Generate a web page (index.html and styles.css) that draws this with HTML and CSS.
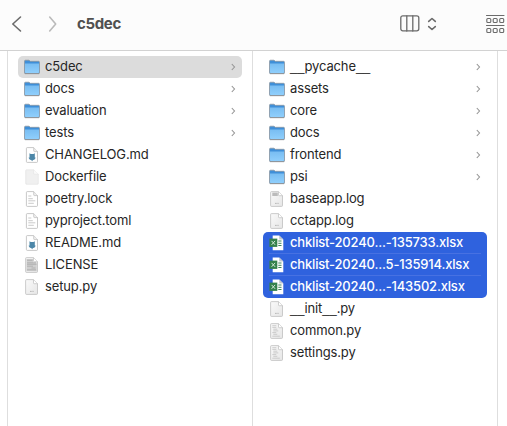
FILE: index.html
```html
<!DOCTYPE html>
<html lang="en">
<head>
<meta charset="utf-8">
<title>c5dec</title>
<link rel="stylesheet" href="styles.css">
</head>
<body>
<svg class="defs" aria-hidden="true">
  <defs>
    <linearGradient id="blue" x1="0" y1="0" x2="0" y2="1"><stop offset="0" stop-color="#78bdf2"/><stop offset="1" stop-color="#90cffc"/></linearGradient>
    <linearGradient id="paper" x1="0" y1="0" x2="1" y2="1"><stop offset="0" stop-color="#fafafa"/><stop offset="1" stop-color="#e6e6e6"/></linearGradient>
  </defs>
  <symbol id="folder" viewBox="0 0 16 16">
    <path d="M.5 2.200Q.5 1.200 1.500 1.200H5l1.300 1.100h8.200q1 0 1 1V13.600q0 1-1 1h-13q-1 0-1-1z" fill="#3f8fd8" stroke="#8b9299" stroke-width=".7"/>
    <path d="M1 4.600h14v8.700q0 .8-.8.8H1.800q-.8 0-.8-.8z" fill="url(#blue)"/>
    <path d="M.8 14.600h14.400" stroke="#8f8f90" stroke-width=".8"/>
  </symbol>
  <symbol id="page" viewBox="0 0 16 16">
    <path d="M2.500.6h7l4 4.100v9.800q0 .9-.9.9H2.500q-.9 0-.9-.9v-13q0-.9.900-.9z" fill="url(#paper)" stroke="#b8b8b8" stroke-width=".7"/>
    <path d="M9.500.8v3.100q0 .8.800.8h3.100" fill="#fff" stroke="#bcbcbc" stroke-width=".7"/>
  </symbol>
  <symbol id="blank" viewBox="0 0 16 16">
    <path d="M2.600.8h7l4.700 4.400v9.200q0 .9-.9.9H2.600q-.9 0-.9-.9V1.700q0-.9.900-.9z" fill="#f0f0f0" stroke="#e0e0e0" stroke-width=".6"/>
    <path d="M9.600.8v3.600q0 .8.800.8h3.900" fill="#fafafa" stroke="#e2e2e2" stroke-width=".6"/>
  </symbol>
  <symbol id="sheet" viewBox="0 0 16 16">
    <path d="M3.300.6h6.400l3.800 4v9.900q0 .9-.9.900H3.300q-.9 0-.9-.9v-13q0-.9.900-.9z" fill="#fff" stroke="#b0b0b0" stroke-width=".7"/>
    <path d="M9.700.8v3q0 .8.800.8h3" fill="#eee" stroke="#b0b0b0" stroke-width=".6"/>
  </symbol>
  <symbol id="markdown" viewBox="0 0 16 16">
    <use href="#sheet"/>
    <path d="M5.500 6.300l1.300.8h2.700l1.300-.8v4.200l1 .2-1.500 2.100-1.300.2-.9 1.300-.9-1.300-1.300-.2-1.400-2.100 1-.2z" fill="#4d87a8"/>
  </symbol>
  <symbol id="lines" viewBox="0 0 16 16">
    <use href="#sheet"/>
    <path d="M4.300 5h3M4.300 7.700h4.500M4.300 9.800h7M4.300 12.300h5.500" stroke="#bdbdbd" stroke-width=".8"/>
  </symbol>
  <symbol id="license" viewBox="0 0 16 16">
    <use href="#page"/>
    <path d="M2.500 2h6.500v3.500h3.700v8.500H2.500z" fill="#cfcfcf"/>
    <path d="M3 3.300h5.500M3 5.800h9M3 7.300h9.500M3 9.200h6M3 12.800h9M7.500 11h4" stroke="#ababab" stroke-width=".8"/>
  </symbol>
  <symbol id="dots" viewBox="0 0 16 16">
    <use href="#page"/>
    <path d="M6 12.400h4" stroke="#aaa" stroke-width=".8" stroke-dasharray="1 .3"/>
  </symbol>
  <symbol id="log" viewBox="0 0 16 16">
    <use href="#dots"/>
    <path d="M3.300 1.600h5.500v3.400H3.300z" fill="#bbb"/>
  </symbol>
  <symbol id="code" viewBox="0 0 16 16">
    <use href="#page"/>
    <path d="M3.300 2.700h4M3.300 4.400h4M4.300 6.200h4M4.300 7.900h5M3.300 9.600h4M4.300 11.300h4M3.300 13.200h7.500" stroke="#bcbcbc" stroke-width=".7"/>
  </symbol>
  <symbol id="excel" viewBox="0 0 16 16">
    <path d="M3.700.6h6.500l4.100 4V15.300H3.700z" fill="#fff"/>
    <path d="M10.200.6l4.100 4h-4.100z" fill="#c2c8cc"/>
    <path d="M9.300 6H12.500M9.300 8.300H12.500M9.300 10.500H12.500" stroke="#3f8558" stroke-width="1"/>
    <path d="M.4 3.600h7.900v8.300H.4z" fill="#34814b"/>
    <path d="M2.600 5.900l3.500 3.900M6.100 5.900l-3.500 3.900" stroke="#d5e9da" stroke-width="1"/>
  </symbol>
  <symbol id="chev" viewBox="0 0 6 8"><path d="M1.800 1L4.500 4 1.800 7" fill="none" stroke="#959595" stroke-width="1.100"/></symbol>
</svg>

<header class="toolbar">
  <svg class="nav" viewBox="0 0 12 16"><path d="M9.500 1L1.800 8l7.700 7"/></svg>
  <svg class="nav forward" viewBox="0 0 12 16"><path d="M2.700 1l6 7-6 7"/></svg>
  <h1>c5dec</h1>
  <svg class="view" viewBox="0 0 20 17"><rect x=".8" y=".8" width="18" height="15" rx="2"/><path d="M6.800 1v15M12.800 1v15"/></svg>
  <svg class="updown" viewBox="0 0 10 14"><path d="M1.700 4.400L5 1.500l3.300 2.900M1.700 9.600L5 12.500l3.300-2.900"/></svg>
  <svg class="group" viewBox="0 0 19 20"><path d="M.5 1.500h17.500M.5 11.500h17.500"/><g><rect x=".8" y="4.500" width="4" height="4" rx="1"/><rect x="7.200" y="4.500" width="4" height="4" rx="1"/><rect x="13.700" y="4.500" width="4" height="4" rx="1"/><rect x=".8" y="14.500" width="4" height="4" rx="1"/><rect x="7.200" y="14.500" width="4" height="4" rx="1"/><rect x="13.700" y="14.500" width="4" height="4" rx="1"/></g></svg>
</header>

<main class="browser">
  <div class="edge"></div>
  <ul class="column">
    <li class="row current"><svg class="icon"><use href="#folder"/></svg><span>c5dec</span><svg class="chev"><use href="#chev"/></svg></li>
    <li class="row"><svg class="icon"><use href="#folder"/></svg><span>docs</span><svg class="chev"><use href="#chev"/></svg></li>
    <li class="row"><svg class="icon"><use href="#folder"/></svg><span>evaluation</span><svg class="chev"><use href="#chev"/></svg></li>
    <li class="row"><svg class="icon"><use href="#folder"/></svg><span>tests</span><svg class="chev"><use href="#chev"/></svg></li>
    <li class="row"><svg class="icon"><use href="#markdown"/></svg><span>CHANGELOG.md</span></li>
    <li class="row"><svg class="icon"><use href="#blank"/></svg><span>Dockerfile</span></li>
    <li class="row"><svg class="icon"><use href="#lines"/></svg><span>poetry.lock</span></li>
    <li class="row"><svg class="icon"><use href="#lines"/></svg><span>pyproject.toml</span></li>
    <li class="row"><svg class="icon"><use href="#markdown"/></svg><span>README.md</span></li>
    <li class="row"><svg class="icon"><use href="#license"/></svg><span>LICENSE</span></li>
    <li class="row"><svg class="icon"><use href="#dots"/></svg><span>setup.py</span></li>
  </ul>
  <ul class="column">
    <li class="row"><svg class="icon"><use href="#folder"/></svg><span><i>__</i>pycache<i>__</i></span><svg class="chev"><use href="#chev"/></svg></li>
    <li class="row"><svg class="icon"><use href="#folder"/></svg><span>assets</span><svg class="chev"><use href="#chev"/></svg></li>
    <li class="row"><svg class="icon"><use href="#folder"/></svg><span>core</span><svg class="chev"><use href="#chev"/></svg></li>
    <li class="row"><svg class="icon"><use href="#folder"/></svg><span>docs</span><svg class="chev"><use href="#chev"/></svg></li>
    <li class="row"><svg class="icon"><use href="#folder"/></svg><span>frontend</span><svg class="chev"><use href="#chev"/></svg></li>
    <li class="row"><svg class="icon"><use href="#folder"/></svg><span>psi</span><svg class="chev"><use href="#chev"/></svg></li>
    <li class="row"><svg class="icon"><use href="#log"/></svg><span>baseapp.log</span></li>
    <li class="row"><svg class="icon"><use href="#dots"/></svg><span>cctapp.log</span></li>
    <li class="row selected first"><svg class="icon"><use href="#excel"/></svg><span>chklist-20240...-135733.xlsx</span></li>
    <li class="row selected"><svg class="icon"><use href="#excel"/></svg><span>chklist-20240...5-135914.xlsx</span></li>
    <li class="row selected last"><svg class="icon"><use href="#excel"/></svg><span>chklist-20240...-143502.xlsx</span></li>
    <li class="row"><svg class="icon"><use href="#dots"/></svg><span><i>__</i>init<i>__</i>.py</span></li>
    <li class="row"><svg class="icon"><use href="#code"/></svg><span>common.py</span></li>
    <li class="row"><svg class="icon"><use href="#code"/></svg><span>settings.py</span></li>
  </ul>
</main>
</body>
</html>
```
FILE: styles.css
```css
* { box-sizing: border-box; }
body {
  margin: 0;
  height: 426px;
  display: flex;
  flex-direction: column;
  overflow: hidden;
  background: #fff;
  color: #262626;
  font: 13px/20px Inter, "Liberation Sans", sans-serif;
  letter-spacing: -0.13px;
}
.defs { position: absolute; width: 0; height: 0; }
.toolbar {
  flex: none;
  display: flex;
  align-items: center;
  height: 51px;
  padding: 0 2px 3px 11px;
  background: #fcfcfc;
  border-bottom: 1px solid #d2d2d2;
  overflow: hidden;
}
.toolbar svg { flex: none; fill: none; stroke: #6b6b6b; stroke-width: 1.3; stroke-linecap: round; stroke-linejoin: round; }
.toolbar .nav { width: 12px; height: 16px; stroke-width: 1.6; overflow: visible; }
.toolbar .forward { margin-left: 24px; stroke: #bababa; }
h1 { margin: 0 auto 0 18px; font-size: 15px; line-height: 20px; font-weight: 700; letter-spacing: -0.35px; color: #505050; }
.view { width: 20px; height: 17px; }
.toolbar .updown { width: 10px; height: 14px; margin-left: 7px; stroke-width: 1.6; }
.toolbar .group { width: 19px; height: 20px; margin-left: 49px; stroke-width: 1.1; }
.browser { flex: 1; display: flex; }
.edge { width: 8px; border-right: 1px solid #dedede; }
.column {
  width: 245px;
  margin: 0;
  padding: 5px 10px 0;
  list-style: none;
  border-right: 1px solid #dedede;
}
.row { position: relative; display: flex; align-items: center; height: 22px; padding: 0 6px; border-radius: 5px; white-space: nowrap; }
.row span { margin-left: 5px; padding-bottom: 2px; }
.row i { font-family: "Liberation Sans", sans-serif; font-style: normal; line-height: 1; letter-spacing: 0; }
.icon { flex: none; width: 16px; height: 16px; }
.chev { width: 6px; height: 8px; margin-left: auto; }
.current { background: #dcdcdc; }
.selected { background: #2f62de; color: #fff; border-radius: 0; font-weight: 500; letter-spacing: -0.18px; }
.selected.first { border-radius: 5px 5px 0 0; }
.selected.last { border-radius: 0 0 5px 5px; }
.selected:not(.last)::after { content: ""; position: absolute; left: 6px; right: 6px; bottom: 0; height: 1px; background: #4771e2; }
```
